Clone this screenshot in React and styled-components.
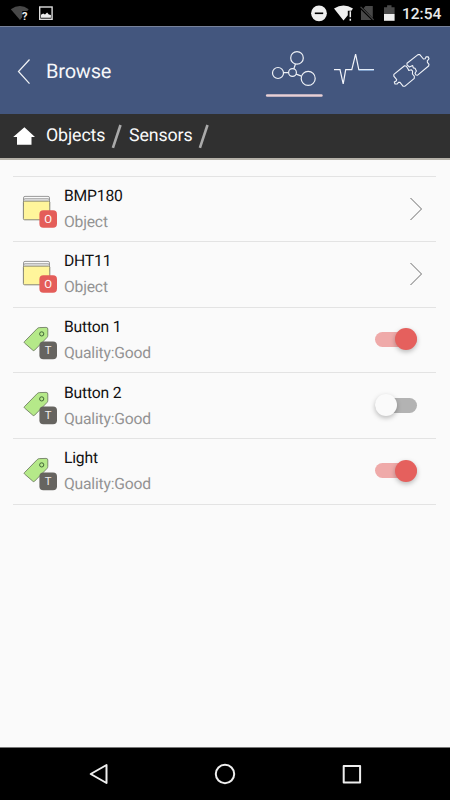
import React, { useState } from "react";
import styled, { createGlobalStyle } from "styled-components";

const GlobalStyle = createGlobalStyle`
  * { box-sizing: border-box; }
  body {
    margin: 0;
    background: #fafafa;
    font-family: Roboto, sans-serif;
    text-rendering: geometricPrecision;
    overflow: hidden;
  }
`;

const Screen = styled.div`
  width: 450px;
  height: 800px;
  display: flex;
  flex-direction: column;
  background: #fafafa;
`;

const StatusBar = styled.div`
  height: 26px;
  flex: none;
  display: flex;
  justify-content: space-between;
  background: #000;
`;

const StatusRight = styled.div`
  display: flex;
`;

const Clock = styled.time`
  width: 50px;
  padding-left: 2px;
  color: #e9e9e9;
  font-size: 15.5px;
  font-weight: 500;
  line-height: 28px;
`;

const Header = styled.header`
  height: 88px;
  flex: none;
  display: flex;
  align-items: stretch;
  padding-right: 8px;
  background: #43567e;
  border-top: 1px solid #77829a;
`;

const BackButton = styled.button`
  width: 46px;
  padding: 0;
  border: 0;
  background: none;
`;

const Title = styled.h1`
  flex: 1;
  margin: 0;
  color: #f6f7f9;
  font-size: 20px;
  font-weight: 400;
  line-height: 88px;
  letter-spacing: -0.2px;
`;

const Tab = styled.button`
  width: ${(p) => p.$width}px;
  display: flex;
  padding: 0;
  border: 0;
  background: none;
`;

const Glyph = styled.svg`
  display: block;
  flex: none;
`;

const Breadcrumbs = styled.nav`
  height: 46px;
  flex: none;
  display: flex;
  background: #303030;
  border-bottom: 2px solid #b5b1a8;
`;

const Crumb = styled.span`
  width: ${(p) => p.$width}px;
  color: #fafafa;
  font-size: 17.8px;
  line-height: 44px;
  letter-spacing: -0.12px;
  white-space: nowrap;
`;

const List = styled.ul`
  flex: 1;
  margin: 0;
  padding: 15.5px 14px 0 13px;
  list-style: none;
`;

const Row = styled.li`
  height: 65.65px;
  display: flex;
  border-top: 1px solid #e3e3e3;
  &:last-child {
    height: 66.65px;
    border-bottom: 1px solid #e3e3e3;
  }
`;

const RowText = styled.div`
  flex: 1;
  padding-top: 9.3px;
`;

const Name = styled.div`
  color: #111;
  font-size: 15.7px;
  line-height: 20px;
  letter-spacing: -0.2px;
`;

const Detail = styled.div`
  margin-top: 7px;
  color: #939393;
  font-size: 15.7px;
  line-height: 18px;
  letter-spacing: -0.2px;
`;

const Switch = styled.button`
  width: 42px;
  height: 22px;
  margin: 20.6px 19px 0 0;
  padding: 0;
  display: flex;
  align-items: center;
  justify-content: ${(p) => (p.$on ? "flex-end" : "flex-start")};
  border: 0;
  background: none;
  position: relative;
  &::before {
    content: "";
    position: absolute;
    inset: 3.5px 0;
    border-radius: 8px;
    background: ${(p) => (p.$on ? "#efaaa9" : "#b3b3b3")};
  }
`;

const Knob = styled.span`
  width: 22px;
  height: 22px;
  position: relative;
  border-radius: 50%;
  background: ${(p) => (p.$on ? "#e5605d" : "#fafafa")};
  box-shadow: 0 2px 5px rgba(0, 0, 0, 0.26);
`;

const NavigationBar = styled.nav`
  height: 53px;
  flex: none;
  display: flex;
  justify-content: center;
  background: #000;
  border-top: 1px solid #777;
`;

/* A glyph drawn in screen units; box is "x y width height". */
function Icon({ box, children, ...rest }) {
  const [, , w, h] = box.split(" ");
  return (
    <Glyph width={w} height={h} viewBox={box} fill="none" aria-hidden="true" {...rest}>
      {children}
    </Glyph>
  );
}

function FolderIcon() {
  return (
    <Icon box="13 177 51 63">
      <rect x="23.5" y="196.4" width="26" height="8" rx="1.5" fill="#fafafa" stroke="#808080" strokeWidth=".8" />
      <rect x="23.5" y="198.8" width="26" height="8" rx="1.5" fill="#f4f4f4" stroke="#808080" strokeWidth=".8" />
      <rect x="23.4" y="201.1" width="26.4" height="18.7" rx="1.2" fill="#fff59b" stroke="#77776c" strokeWidth=".9" />
      <rect x="39.4" y="210.2" width="17.6" height="17.6" rx="4" fill="#e45d59" />
      <text x="48.2" y="223.2" fill="#fff" fontSize="11.3" fontFamily="Roboto" textAnchor="middle">O</text>
    </Icon>
  );
}

function TagIcon() {
  return (
    <Icon box="13 308 51 63">
      <path d="M24.4 341.7 37.2 328.6Q38.2 327.6 39.6 327.6L46.1 327.4Q47.8 327.4 47.8 329V335.4Q47.8 336.7 46.9 337.6L34.6 350.2Q33.7 351.1 32.8 350.2L24.5 343Q23.8 342.4 24.4 341.7Z" fill="#b5e989" stroke="#657159" strokeWidth=".8" />
      <circle cx="41.7" cy="333.9" r="2.1" stroke="#416637" strokeWidth="1" />
      <rect x="39.4" y="341.6" width="17.6" height="17.6" rx="4" fill="#666460" />
      <text x="48.2" y="354.4" fill="#eee" fontSize="11.3" fontFamily="Roboto" textAnchor="middle">T</text>
    </Icon>
  );
}

const items = [
  { name: "BMP180", detail: "Object", kind: "object" },
  { name: "DHT11", detail: "Object", kind: "object" },
  { name: "Button 1", detail: "Quality:Good", kind: "tag", on: true },
  { name: "Button 2", detail: "Quality:Good", kind: "tag", on: false },
  { name: "Light", detail: "Quality:Good", kind: "tag", on: true },
];

function ListItem({ item }) {
  const [on, setOn] = useState(item.on);
  const isObject = item.kind === "object";
  return (
    <Row>
      {isObject ? <FolderIcon /> : <TagIcon />}
      <RowText>
        <Name>{item.name}</Name>
        <Detail>{item.detail}</Detail>
      </RowText>
      {isObject ? (
        <Icon box="399 177 37 63">
          <path d="m410.5 198 11 11-11 11" stroke="#6d6d6d" strokeWidth="1" />
        </Icon>
      ) : (
        <Switch $on={on} role="switch" aria-checked={on} aria-label={item.name} onClick={() => setOn(!on)}>
          <Knob $on={on} />
        </Switch>
      )}
    </Row>
  );
}

function Slash() {
  return (
    <Icon box="110 114 19 44">
      <path d="m112.9 147.8 7.6-22.8" stroke="#aaa" strokeWidth="2.6" />
    </Icon>
  );
}

export default function App() {
  return (
    <Screen>
      <GlobalStyle />
      <StatusBar>
        <Icon box="0 0 70 26">
          <path d="M10.8 9.2Q20 3 28.7 9.2L20 20Z" fill="#484848" />
          <path d="M22.3 11h7v9h-7z" fill="#000" />
          <text x="22" y="19.6" fill="#eee" fontSize="11" fontWeight="700" fontFamily="Roboto">?</text>
          <rect x="39.7" y="7" width="12.4" height="12.3" stroke="#ddd" strokeWidth="1.4" />
          <path d="M41 17.8v-3l2.2-1.4 1.8 1 2.1-2 1.7 2 2.1.7v2.7z" fill="#eee" />
        </Icon>
        <StatusRight>
          <Icon box="300 0 100 26">
            <circle cx="319" cy="13.3" r="7.9" fill="#eee" />
            <path d="M314.8 13.3h8.4" stroke="#000" strokeWidth="1.6" />
            <path d="M334 8.6Q343.5 2.2 353 8.6L351.4 10.7H347.8V15.2L343.5 20.5Z" fill="#eee" />
            <path d="M350.3 11.3v6M350.3 18.8v2" stroke="#eee" strokeWidth="1.5" />
            <path d="M365.5 6h7.3v12L363.5 8.3ZM361 9.8 371.5 20H361Z" fill="#484848" />
            <path d="m360.6 6.8 13 13" stroke="#484848" strokeWidth="1.2" />
            <path d="M384 7.2h3.1V5.3h4.4v1.9h3.1v6.9H384z" fill="#484848" />
            <path d="M384 14h10.6v6.8H384z" fill="#eee" />
          </Icon>
          <Clock>12:54</Clock>
        </StatusRight>
      </StatusBar>
      <Header>
        <BackButton aria-label="Back">
          <Icon box="0 27 46 87"><path d="M29.5 59.5 18.5 71.5 29.5 83.7" stroke="#f0f2f5" strokeWidth="1.25" /></Icon>
        </BackButton>
        <Title>Browse</Title>
        <Tab $width={64} aria-label="Objects">
          <Icon box="262 27 64 87">
            <g stroke="#eef1f6" strokeWidth="1.2">
              <circle cx="297" cy="57.9" r="6.3" /><circle cx="278" cy="73" r="5.5" />
              <circle cx="292.5" cy="72.5" r="3.9" /><circle cx="308.2" cy="78.4" r="7" />
              <path d="M283.5 72.7h5.1M293.8 68.8l1.7-4.8M296.2 74.1l5.2 2" />
            </g>
            <path d="M267.2 95.5h54.2" stroke="#e9d0d5" strokeWidth="2.6" strokeLinecap="round" />
          </Icon>
        </Tab>
        <Tab $width={58} aria-label="Signals">
          <Icon box="326 27 58 87">
            <path d="M334 69.6h6l3.2 14.2L345.7 69.6h6.1L355.6 54.2 358.8 69.6H374" stroke="#f2f4fa" strokeWidth="1.2" />
            <path d="M358.8 70.3h15" stroke="#87b7ed" strokeWidth=".7" />
          </Icon>
        </Tab>
        <Tab $width={58} aria-label="Extensions">
          <Icon box="384 27 58 87">
            <g stroke="#f0f3f8" strokeWidth="1.1" strokeLinejoin="round">
              <path d="M407 63.2 418 54.6 419.8 54.6 423.4 59 425.2 58.8 426 56.9 428.2 56.7 429 58.8 427.3 60.8 427.4 62.3 429 64.3 428.6 66 417.6 75.2 416 75 415 73.2 416.4 71 415 68.2 413.3 67.9 412.7 65.6 409.4 67 407 64.9Z" />
              <path d="M404.5 65.7 393.9 74.4 393.8 76.1 396.7 79.6 396.2 81 394.3 82.1 395 84 397.2 84 398.5 82.3 400 82.4 403 86.2 405 86.2 414.3 78.3 414.3 76.2 412.4 74 412.6 71.2 411.4 69.8 408.8 70.5 408.2 69.2 406.4 66.2Z" />
            </g>
          </Icon>
        </Tab>
      </Header>
      <Breadcrumbs>
        <Icon box="0 114 46 44"><path d="m13.2 137 11.2-9.8L35 137h-3.5v7.8H17V137Z" fill="#fff" /></Icon>
        <Crumb $width={64}>Objects</Crumb>
        <Slash />
        <Crumb $width={68}>Sensors</Crumb>
        <Slash />
      </Breadcrumbs>
      <List>{items.map((item) => <ListItem key={item.name} item={item} />)}</List>
      <NavigationBar>
        <Icon box="0 748 450 52">
          <g stroke="#eee" strokeWidth="2" strokeLinejoin="round">
            <path d="M106.5 765v18l-15.8-9Z" />
            <circle cx="225" cy="774" r="9.2" />
            <rect x="343.7" y="766" width="16.4" height="16.4" />
          </g>
        </Icon>
      </NavigationBar>
    </Screen>
  );
}
